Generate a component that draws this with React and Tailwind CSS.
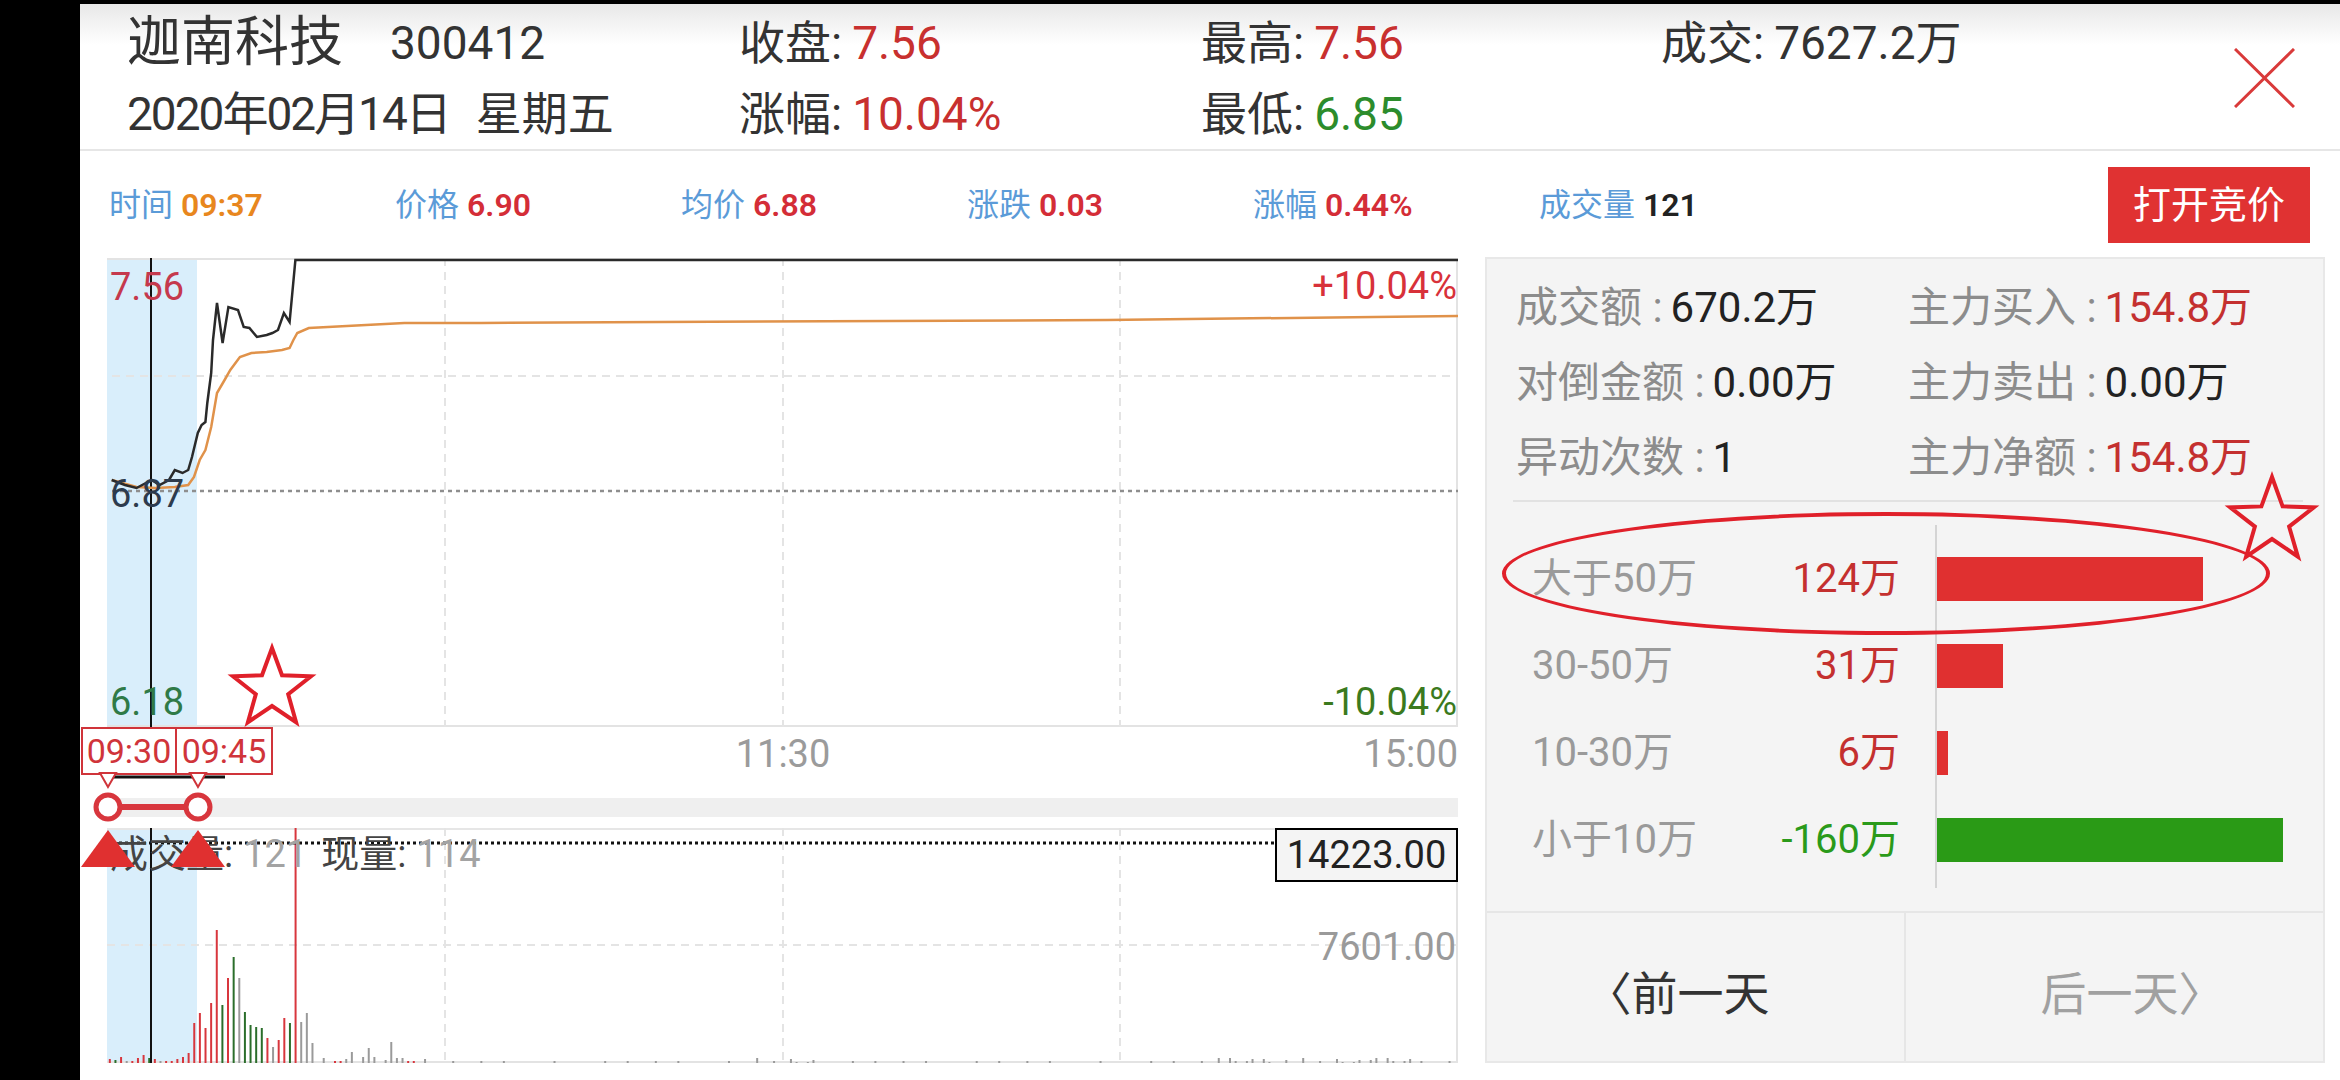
import React from 'react';

const STEP = 1351 / 240;

// price line, local coords inside the 1351x469 price chart
const pricePts = [
  [4.7, 222], [18, 227], [29.5, 230], [44.8, 222], [52.5, 227], [62, 222], [67.8, 212], [75.5, 215],
  [81.2, 212], [85, 199], [90.8, 175], [94.6, 167], [98.4, 164], [100.3, 145], [104.2, 115], [106, 82],
  [110, 45], [115.6, 85], [121.4, 49], [131, 52], [136.7, 69], [142.4, 70], [150, 79], [159.7, 77],
  [165.4, 75], [171, 72], [176.9, 55], [182.6, 64], [188.4, 2], [1351, 2],
];

const avgPts = [
  [4.7, 222], [29.5, 229], [48.7, 230], [67.8, 229], [81.2, 227], [87, 219], [92.7, 202], [98.4, 192],
  [104.2, 169], [110, 135], [117.6, 122], [123.3, 112], [132.9, 99], [144.4, 95], [159.7, 94], [175, 92],
  [182.6, 90], [186.4, 82], [190.3, 75], [201.8, 70], [220.9, 69], [259, 67], [297.4, 65], [374, 65],
  [553, 64], [1000, 62], [1351, 58],
];

// first minutes of volume: [height, color]
const firstBars = [
  [4, 'r'], [3, 'g'], [6, 'r'], [2, 'n'], [2, 'r'], [5, 'r'], [8, 'r'], [5, 'g'], [4, 'r'], [2, 'n'],
  [2, 'r'], [2, 'r'], [4, 'r'], [6, 'r'], [10, 'r'], [40, 'r'], [50, 'r'], [35, 'r'], [60, 'r'], [133, 'r'],
  [58, 'g'], [85, 'r'], [106, 'g'], [85, 'n'], [51, 'g'], [38, 'g'], [36, 'g'], [35, 'g'], [25, 'r'], [16, 'n'],
  [23, 'r'], [45, 'r'], [40, 'g'], [235, 'r'], [41, 'n'], [50, 'n'], [20, 'n'],
];

const barColor = { r: '#d8363d', g: '#2b6e2b', n: '#9a9a9a' };

function buildBars() {
  const bars = firstBars.map(([h, c]) => ({ h, c }));
  for (let i = bars.length; i < 240; i++) {
    const seed = (i * 7919) % 97;
    let h = 0;
    if (i < 58) h = seed % 3 === 0 ? 0 : 2 + (seed % 5);
    else if ((i > 112 && i < 126) || (i > 196 && i < 232)) h = seed % 2 === 0 ? 0 : 1 + (seed % 5);
    else if (seed % 6 === 0) h = 2;
    if (i === 43) h = 11;
    if (i === 46) h = 15;
    if (i === 50) h = 21;
    bars.push({ h, c: i > 60 ? 'n' : seed % 5 === 0 ? 'r' : 'n' });
  }
  return bars;
}

const toPoints = (pts) => pts.map(([x, y]) => `${x},${y}`).join(' ');

function starPoints(cx, cy, R, r) {
  const pts = [];
  for (let k = 0; k < 10; k++) {
    const a = ((-90 + 36 * k) * Math.PI) / 180;
    const rad = k % 2 === 0 ? R : r;
    pts.push(`${(cx + rad * Math.cos(a)).toFixed(1)},${(cy + rad * Math.sin(a)).toFixed(1)}`);
  }
  return pts.join(' ');
}

function Header() {
  return (
    <header className="h-[147px] shrink-0 flex border-b-2 border-[#e6e6e6] bg-linear-to-b from-[#e8e8e8] to-white to-[28%] text-[#333] pl-[47px] pt-[3px]">
      <div className="w-[612px] flex flex-col">
        <div className="h-[71px] flex items-center">
          <span className="text-[54px] leading-none">迦南科技</span>
          <span className="text-[46px] leading-none ml-[47px]">300412</span>
        </div>
        <div className="h-[71px] flex items-center text-[46px] leading-none">
          <span className="tracking-[-2px]">2020年02月14日</span>
          <span className="ml-[26px]">星期五</span>
        </div>
      </div>
      <div className="w-[462px] flex flex-col text-[46px] leading-none">
        <div className="h-[71px] flex items-center">收盘: <span className="ml-[10px] text-[#c8302f]">7.56</span></div>
        <div className="h-[71px] flex items-center">涨幅: <span className="ml-[10px] text-[#c8302f]">10.04%</span></div>
      </div>
      <div className="w-[460px] flex flex-col text-[46px] leading-none">
        <div className="h-[71px] flex items-center">最高: <span className="ml-[10px] text-[#c8302f]">7.56</span></div>
        <div className="h-[71px] flex items-center">最低: <span className="ml-[10px] text-[#2c8c2c]">6.85</span></div>
      </div>
      <div className="flex-1 flex flex-col text-[46px] leading-none">
        <div className="h-[71px] flex items-center">成交: <span className="ml-[10px]">7627.2万</span></div>
      </div>
      <svg className="mt-[41px] mr-[45px] shrink-0" width="61" height="60" viewBox="0 0 61 60">
        <path d="M1 1 L60 59 M60 1 L1 59" stroke="#d93a3a" strokeWidth="3" fill="none" />
      </svg>
    </header>
  );
}

const infoItems = [
  { label: '时间', value: '09:37', cls: 'text-[#e8871e]' },
  { label: '价格', value: '6.90', cls: 'text-[#d42d37]' },
  { label: '均价', value: '6.88', cls: 'text-[#d42d37]' },
  { label: '涨跌', value: '0.03', cls: 'text-[#d42d37]' },
  { label: '涨幅', value: '0.44%', cls: 'text-[#d42d37]' },
  { label: '成交量', value: '121', cls: 'text-[#222] font-normal' },
];

function InfoRow() {
  return (
    <div className="h-[107px] shrink-0 flex items-center pl-[29px] pr-[30px]">
      {infoItems.map((it) => (
        <div key={it.label} className="w-[286px] text-[32px] leading-none flex items-center">
          <span className="text-[#5b9bd8]">{it.label}</span>
          <span className={`ml-[8px] font-semibold ${it.cls}`}>{it.value}</span>
        </div>
      ))}
      <button className="ml-auto w-[202px] h-[76px] bg-[#e03232] text-white text-[38px] leading-none">打开竞价</button>
    </div>
  );
}

function PriceChart() {
  return (
    <div className="relative h-[469px] shrink-0">
      <svg width="1351" height="469" viewBox="0 0 1351 469" className="block">
        <rect x="0" y="0" width="90" height="469" fill="#d9eefb" />
        <line x1="0" y1="1" x2="1351" y2="1" stroke="#e3e3e3" strokeWidth="2" />
        <line x1="1350" y1="0" x2="1350" y2="469" stroke="#e3e3e3" strokeWidth="2" />
        <line x1="0" y1="468" x2="1351" y2="468" stroke="#e3e3e3" strokeWidth="2" />
        {[338, 676, 1013].map((x) => (
          <line key={x} x1={x} y1="0" x2={x} y2="469" stroke="#e4e4e4" strokeWidth="2" strokeDasharray="8 6" />
        ))}
        <line x1="5" y1="118" x2="1351" y2="118" stroke="#e4e4e4" strokeWidth="2" strokeDasharray="8 6" />
        <line x1="5" y1="233" x2="1351" y2="233" stroke="#8e8e8e" strokeWidth="2.5" strokeDasharray="4 4" />
        <line x1="44" y1="0" x2="44" y2="469" stroke="#111" strokeWidth="2" />
        <polyline points={toPoints(avgPts)} fill="none" stroke="#e0924a" strokeWidth="2.5" />
        <polyline points={toPoints(pricePts)} fill="none" stroke="#2a2a2a" strokeWidth="2.5" />
      </svg>
      <span className="absolute left-[3px] top-[10px] text-[38px] leading-none text-[#c5394d]">7.56</span>
      <span className="absolute left-[3px] top-[217px] text-[38px] leading-none text-[#2d3b4d]">6.87</span>
      <span className="absolute left-[3px] top-[425px] text-[38px] leading-none text-[#2f7a47]">6.18</span>
      <span className="absolute right-[1px] top-[9px] text-[38px] leading-none text-[#d8313a]">+10.04%</span>
      <span className="absolute right-[1px] top-[425px] text-[38px] leading-none text-[#3b7a1e]">-10.04%</span>
    </div>
  );
}

function VolumeChart() {
  const bars = buildBars();
  return (
    <div className="relative h-[235px] shrink-0">
      <svg width="1351" height="235" viewBox="0 0 1351 235" className="block">
        <rect x="0" y="0" width="90" height="235" fill="#d9eefb" />
        <line x1="0" y1="1" x2="1351" y2="1" stroke="#e6e6e6" strokeWidth="2" />
        <line x1="1350" y1="0" x2="1350" y2="235" stroke="#e3e3e3" strokeWidth="2" />
        <line x1="0" y1="234" x2="1351" y2="234" stroke="#e3e3e3" strokeWidth="2" />
        {[338, 676, 1013].map((x) => (
          <line key={x} x1={x} y1="0" x2={x} y2="235" stroke="#e4e4e4" strokeWidth="2" strokeDasharray="8 6" />
        ))}
        <line x1="0" y1="117" x2="1351" y2="117" stroke="#e4e4e4" strokeWidth="2" strokeDasharray="8 6" />
        {bars.map((b, i) =>
          b.h > 0 ? (
            <line
              key={i}
              x1={(i + 0.5) * STEP}
              x2={(i + 0.5) * STEP}
              y1={235 - b.h}
              y2={235}
              stroke={barColor[b.c]}
              strokeWidth="2"
            />
          ) : null
        )}
        <line x1="44" y1="0" x2="44" y2="235" stroke="#111" strokeWidth="2" />
        <line x1="0" y1="15" x2="1169" y2="15" stroke="#111" strokeWidth="3" strokeDasharray="3 3" />
      </svg>
      <div className="absolute left-[3px] top-[7px] text-[38px] leading-none flex">
        <span className="text-[#444]">成交量:</span>
        <span className="ml-[10px] text-[#a3a3a3]">121</span>
        <span className="ml-[14px] text-[#444]">现量:</span>
        <span className="ml-[10px] text-[#a3a3a3]">114</span>
      </div>
      <div className="absolute right-0 top-0 w-[183px] h-[54px] border-2 border-black bg-[#f4f4f4] flex items-center justify-center text-[38px] leading-none text-[#222]">
        14223.00
      </div>
      <span className="absolute right-[2px] top-[100px] text-[38px] leading-none text-[#9a9a9a]">7601.00</span>
    </div>
  );
}

function RangeMarker() {
  return (
    <>
      <div className="absolute left-[-26px] top-[469px] flex">
        <div className="w-[96px] h-[48px] border-2 border-[#d0343a] bg-white flex items-center justify-center text-[34px] leading-none text-[#d0343a]">09:30</div>
        <div className="w-[96px] h-[48px] border-2 border-l-0 border-[#d0343a] bg-white flex items-center justify-center text-[34px] leading-none text-[#d0343a]">09:45</div>
      </div>
      <svg className="absolute left-[-30px] top-[512px]" width="180" height="100" viewBox="0 0 180 100">
        <line x1="35" y1="7" x2="148" y2="7" stroke="#111" strokeWidth="3" />
        <polygon points="23,3 31,17 39,3" fill="#fff" stroke="#d0343a" strokeWidth="2" />
        <polygon points="113,3 121,17 129,3" fill="#fff" stroke="#d0343a" strokeWidth="2" />
        <rect x="40" y="34" width="72" height="6" fill="#d8363d" />
        <circle cx="31" cy="37" r="12" fill="#fff" stroke="#d8363d" strokeWidth="5" />
        <circle cx="121" cy="37" r="12" fill="#fff" stroke="#d8363d" strokeWidth="5" />
        <polygon points="4,97 31,60 58,97" fill="#e03030" />
        <polygon points="94,97 121,60 148,97" fill="#e03030" />
      </svg>
    </>
  );
}

function ChartColumn() {
  return (
    <div className="relative w-[1351px] shrink-0 flex flex-col">
      <PriceChart />
      <div className="relative h-[71px] shrink-0 text-[38px] leading-none text-[#9b9b9b]">
        <span className="absolute left-[676px] top-[8px] -translate-x-1/2">11:30</span>
        <span className="absolute right-0 top-[8px]">15:00</span>
      </div>
      <div className="h-[19px] shrink-0 bg-[#efefef]" />
      <div className="h-[11px] shrink-0" />
      <VolumeChart />
      <RangeMarker />
    </div>
  );
}

const stats = [
  [{ label: '成交额', value: '670.2万', cls: 'text-[#222]' }, { label: '主力买入', value: '154.8万', cls: 'text-[#c4302f]' }],
  [{ label: '对倒金额', value: '0.00万', cls: 'text-[#222]' }, { label: '主力卖出', value: '0.00万', cls: 'text-[#222]' }],
  [{ label: '异动次数', value: '1', cls: 'text-[#222]' }, { label: '主力净额', value: '154.8万', cls: 'text-[#c4302f]' }],
];

const dist = [
  { label: '大于50万', value: '124万', w: 266, cls: 'text-[#c4302f]', bar: 'bg-[#e03030]' },
  { label: '30-50万', value: '31万', w: 66, cls: 'text-[#c4302f]', bar: 'bg-[#e03030]' },
  { label: '10-30万', value: '6万', w: 11, cls: 'text-[#c4302f]', bar: 'bg-[#e03030]' },
  { label: '小于10万', value: '-160万', w: 346, cls: 'text-[#2a9a1a]', bar: 'bg-[#2a9a16]' },
];

function SidePanel() {
  return (
    <aside className="w-[840px] h-[806px] shrink-0 -mt-[1px] bg-[#f4f4f4] border-2 border-[#e8e8e8] flex flex-col">
      <div className="pt-[11px] pl-[29px]">
        {stats.map((row, i) => (
          <div key={i} className="h-[75px] grid grid-cols-[392px_1fr] items-center text-[42px] leading-none">
            {row.map((s) => (
              <div key={s.label} className="flex items-center">
                <span className="text-[#8c8c8c]">{s.label} :</span>
                <span className={`ml-[8px] ${s.cls}`}>{s.value}</span>
              </div>
            ))}
          </div>
        ))}
      </div>
      <div className="mt-[5px] ml-[26px] mr-[20px] h-[2px] bg-[#e2e2e2]" />
      <div className="flex mt-[23px] h-[363px]">
        <div className="w-[448px] pt-[10px] pl-[45px] pr-[35px] text-[40px] leading-none">
          {dist.map((d) => (
            <div key={d.label} className="h-[87px] flex items-center justify-between">
              <span className="text-[#9a9a9a]">{d.label}</span>
              <span className={d.cls}>{d.value}</span>
            </div>
          ))}
        </div>
        <div className="flex-1 border-l-2 border-[#d4d4d4] pt-[10px]">
          {dist.map((d) => (
            <div key={d.label} className="h-[87px] flex items-center">
              <div className={`h-[44px] ${d.bar}`} style={{ width: d.w }} />
            </div>
          ))}
        </div>
      </div>
      <div className="mt-auto h-[150px] flex border-t-2 border-[#e6e6e6] text-[46px] leading-none">
        <div className="flex-1 flex items-center justify-center pt-[14px] pr-[36px] text-[#333] border-r-2 border-[#e6e6e6]">〈前一天</div>
        <div className="flex-1 flex items-center justify-center pt-[14px] pl-[36px] text-[#a0a0a0]">后一天〉</div>
      </div>
    </aside>
  );
}

export default function App() {
  return (
    <div className="relative w-[2340px] h-[1080px] bg-black overflow-hidden font-[Roboto,'Noto_Sans_CJK_SC',sans-serif]">
      <div className="flex h-full pt-[4px]">
        <div className="w-[80px] shrink-0" />
        <main className="flex-1 flex flex-col bg-white">
          <Header />
          <InfoRow />
          <div className="flex pl-[27px] pr-[15px] gap-[27px]">
            <ChartColumn />
            <SidePanel />
          </div>
        </main>
      </div>

      {/* hand-drawn annotations */}
      <div className="absolute left-[1502px] top-[512px] w-[768px] h-[123px] rounded-[50%] border-[4px] border-[#e0202a]" />
      <svg className="absolute left-[2222px] top-[470px]" width="100" height="95" viewBox="2222 470 100 95">
        <polygon points={starPoints(2272, 521, 44, 18)} fill="none" stroke="#e0202a" strokeWidth="4" />
      </svg>
      <svg className="absolute left-[225px] top-[642px]" width="95" height="88" viewBox="225 642 95 88">
        <polygon points={starPoints(272, 689, 41, 17)} fill="none" stroke="#e0202a" strokeWidth="4" />
      </svg>
    </div>
  );
}
